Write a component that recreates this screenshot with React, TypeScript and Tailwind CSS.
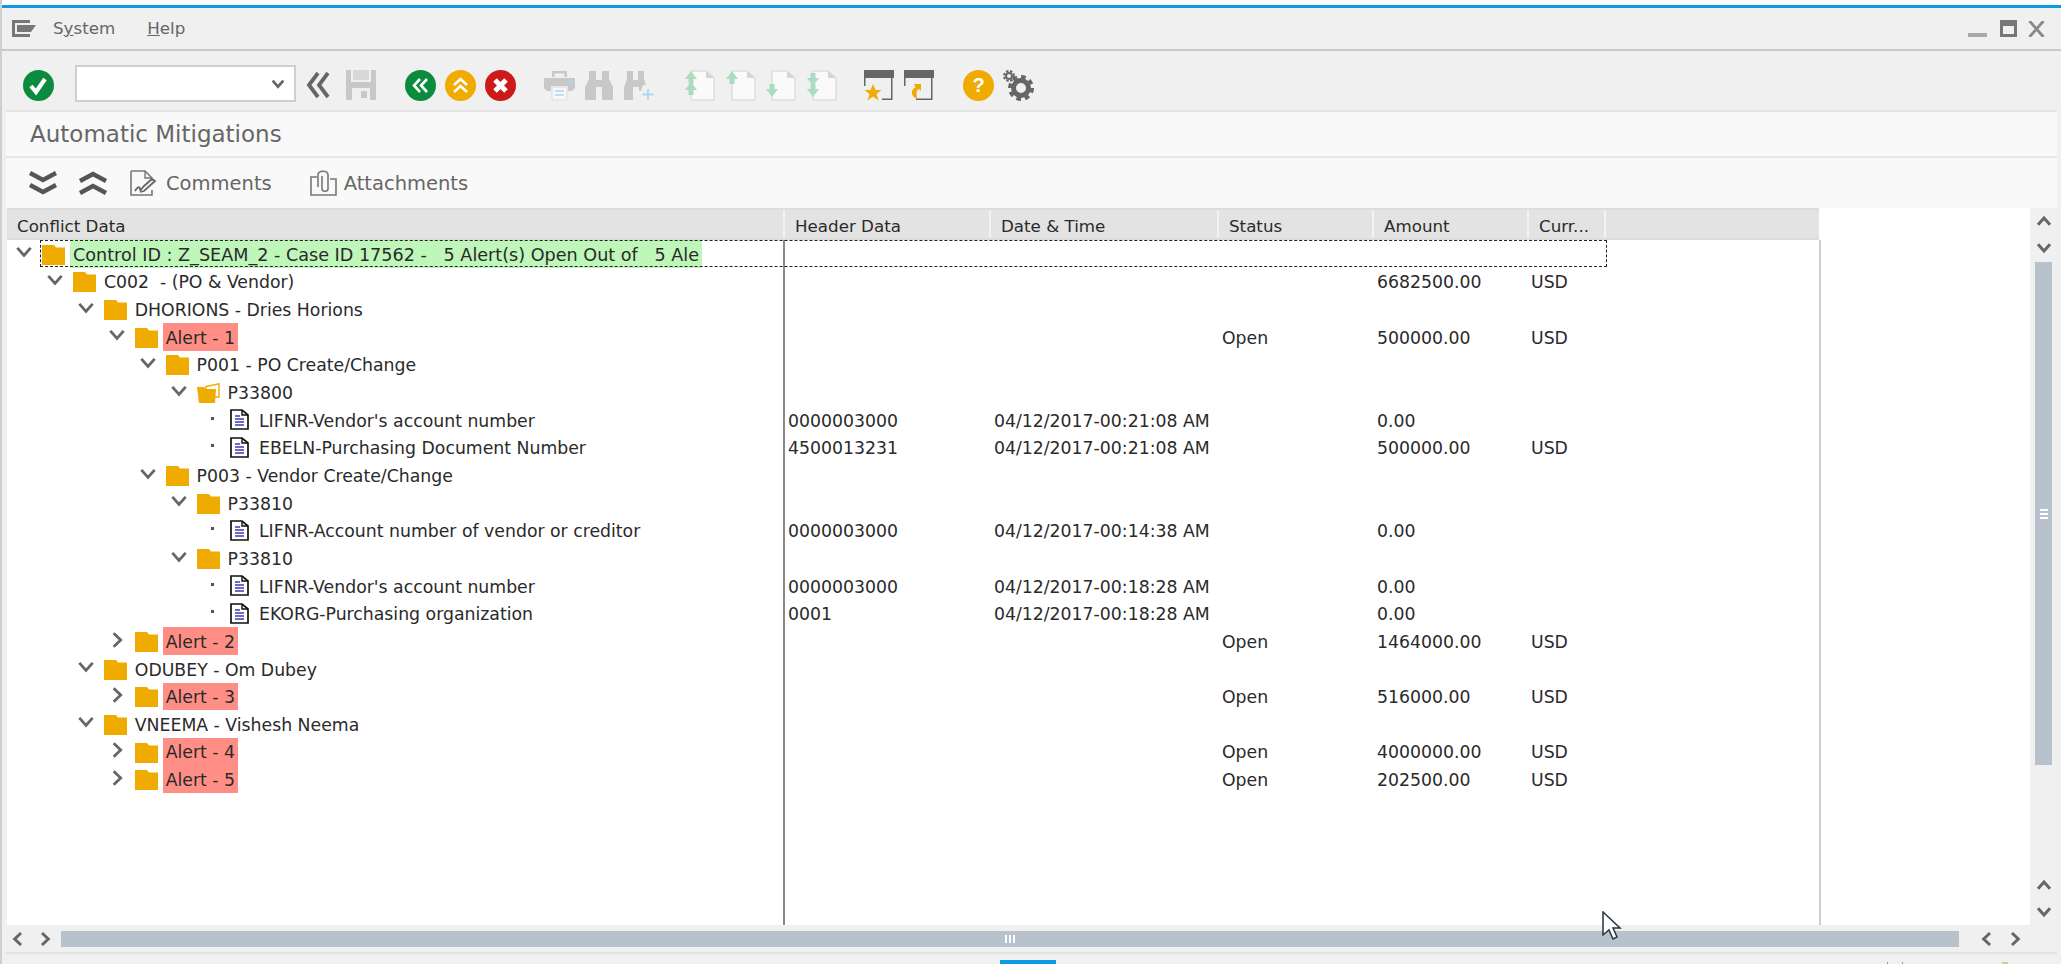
import React from "react";

const FONT = "font-['DejaVu_Sans',sans-serif]";

function Chevron({ dir, className = "", size = 12, stroke = 2.4 }: { dir: "up" | "down" | "left" | "right"; className?: string; size?: number; stroke?: number }) {
  const d = { up: "M2 8.500 6 4l4 4.500", down: "M2 3.500 6 8l4-4.500", left: "M8 2 3.800 6 8 10", right: "M4 2l4.200 4L4 10" }[dir];
  return (
    <svg width={size} height={size} viewBox="0 0 12 12" className={"shrink-0 " + className}>
      <path d={d} fill="none" stroke="#666" strokeWidth={stroke} />
    </svg>
  );
}

function Folder({ open }: { open?: boolean }) {
  return (
    <svg width="23" height="20" viewBox="0 0 23 20" className="mt-[2px] shrink-0">
      {open ? (
        <>
          <path d="M9 3.500 22 .8V14H9z" fill="#fff" stroke="#f0ab00" strokeWidth="1.400" />
          <path d="M0 4h7l2 2h10l-1 14H2z" fill="#f0ab00" />
        </>
      ) : (
        <path d="M0 0h12l2 2.500h9V20H0z" fill="#f0ab00" />
      )}
    </svg>
  );
}

function Doc() {
  return (
    <svg width="19" height="21" viewBox="0 0 19 21" className="shrink-0">
      <path d="M1 1h11l6 5v14H1z" fill="#fff" stroke="#111" strokeWidth="1.700" />
      <path d="M12 1v5h6" fill="none" stroke="#111" strokeWidth="1.400" />
      <path d="M5 7h5M5 10h9M5 13h9M5 16h9" stroke="#3b3bb0" strokeWidth="1.600" />
    </svg>
  );
}

function Round({ color, children }: { color: string; children: React.ReactNode }) {
  return (
    <svg width="31" height="31" viewBox="0 0 31 31" className="shrink-0">
      <circle cx="15.500" cy="15.500" r="15.500" fill={color} />
      {children}
    </svg>
  );
}

function Page({ up, down }: { up?: number[]; down?: number[] }) {
  return (
    <svg width="30" height="31" viewBox="0 0 30 31" className="shrink-0">
      <path d="M6 1h15l8 7v22H6z" fill="#fafafa" stroke="#dedede" strokeWidth="1.500" />
      <path d="M21 1v7h8z" fill="#d6d6d6" />
      {(up || []).map((y) => (
        <path key={"u" + y} d={`M0 ${y}l6-8 6 8h-3.500v5h-5v-5z`} fill="#a9dcc0" />
      ))}
      {(down || []).map((y) => (
        <path key={"d" + y} d={`M0 ${y}l6 8 6-8h-3.500v-5h-5v5z`} fill="#a9dcc0" />
      ))}
    </svg>
  );
}

function Gear() {
  return (
    <svg width="32" height="31" viewBox="0 0 32 31" className="shrink-0">
      <circle cx="19" cy="18" r="7.500" fill="none" stroke="#666" strokeWidth="5" />
      <circle cx="19" cy="18" r="11" fill="none" stroke="#666" strokeWidth="4" strokeDasharray="4.600 4" />
      <circle cx="7" cy="6" r="3" fill="none" stroke="#666" strokeWidth="2" />
      <circle cx="7" cy="6" r="5" fill="none" stroke="#666" strokeWidth="2" strokeDasharray="2.400 1.600" />
    </svg>
  );
}

type Row = {
  level: number;
  text: string;
  tone?: "green" | "red";
  state?: "open" | "closed" | "leaf";
  openFolder?: boolean;
  header?: string;
  date?: string;
  status?: string;
  amount?: string;
  curr?: string;
};

const rows: Row[] = [
  { level: 0, text: "Control ID : Z_SEAM_2 - Case ID 17562 -   5 Alert(s) Open Out of   5 Ale", tone: "green", state: "open" },
  { level: 1, text: "C002  - (PO & Vendor)", state: "open", amount: "6682500.00", curr: "USD" },
  { level: 2, text: "DHORIONS - Dries Horions", state: "open" },
  { level: 3, text: "Alert - 1", tone: "red", state: "open", status: "Open", amount: "500000.00", curr: "USD" },
  { level: 4, text: "P001 - PO Create/Change", state: "open" },
  { level: 5, text: "P33800", state: "open", openFolder: true },
  { level: 6, text: "LIFNR-Vendor's account number", state: "leaf", header: "0000003000", date: "04/12/2017-00:21:08 AM", amount: "0.00" },
  { level: 6, text: "EBELN-Purchasing Document Number", state: "leaf", header: "4500013231", date: "04/12/2017-00:21:08 AM", amount: "500000.00", curr: "USD" },
  { level: 4, text: "P003 - Vendor Create/Change", state: "open" },
  { level: 5, text: "P33810", state: "open" },
  { level: 6, text: "LIFNR-Account number of vendor or creditor", state: "leaf", header: "0000003000", date: "04/12/2017-00:14:38 AM", amount: "0.00" },
  { level: 5, text: "P33810", state: "open" },
  { level: 6, text: "LIFNR-Vendor's account number", state: "leaf", header: "0000003000", date: "04/12/2017-00:18:28 AM", amount: "0.00" },
  { level: 6, text: "EKORG-Purchasing organization", state: "leaf", header: "0001", date: "04/12/2017-00:18:28 AM", amount: "0.00" },
  { level: 3, text: "Alert - 2", tone: "red", state: "closed", status: "Open", amount: "1464000.00", curr: "USD" },
  { level: 2, text: "ODUBEY - Om Dubey", state: "open" },
  { level: 3, text: "Alert - 3", tone: "red", state: "closed", status: "Open", amount: "516000.00", curr: "USD" },
  { level: 2, text: "VNEEMA - Vishesh Neema", state: "open" },
  { level: 3, text: "Alert - 4", tone: "red", state: "closed", status: "Open", amount: "4000000.00", curr: "USD" },
  { level: 3, text: "Alert - 5", tone: "red", state: "closed", status: "Open", amount: "202500.00", curr: "USD" },
];

function TreeRow({ row, focused }: { row: Row; focused: boolean }) {
  const leaf = row.state === "leaf";
  return (
    <div className="relative flex h-[27.67px] shrink-0 items-stretch text-[17.3px] leading-none text-[#2a2a2a]">
      <div className="flex w-[778px] shrink-0 items-center border-r-2 border-[#8a8a8a]" style={{ paddingLeft: 8 + row.level * 30.9 }}>
        <div className="flex w-[18px] shrink-0 justify-center pb-[3px]">
          {leaf ? (
            <div className="ml-[6px] h-[3px] w-[3px] bg-[#555]" />
          ) : (
            <Chevron dir={row.state === "open" ? "down" : "right"} size={20} stroke={1.7} />
          )}
        </div>
        <div className={leaf ? "ml-[11.6px] flex" : "ml-[9px] flex"}>{leaf ? <Doc /> : <Folder open={row.openFolder} />}</div>
        <div
          className={
            "flex h-full items-center whitespace-pre px-[3px] pt-[3px] " +
            (leaf ? "ml-[7px]" : "ml-[5px]") +
            (row.tone === "green" ? " bg-[#bff6ba] text-[17.6px]" : row.tone === "red" ? " bg-[#ff8f86]" : "")
          }
        >
          {row.text}
        </div>
      </div>
      <div className="flex w-[206px] shrink-0 items-center pl-[3px] pt-[3px]">{row.header}</div>
      <div className="flex w-[228px] shrink-0 items-center pl-[3px] pt-[3px]">{row.date}</div>
      <div className="flex w-[155px] shrink-0 items-center pl-[3px] pt-[3px]">{row.status}</div>
      <div className="flex w-[155px] shrink-0 items-center pl-[3px] pt-[3px]">{row.amount}</div>
      <div className="flex w-[77px] shrink-0 items-center pl-[2px] pt-[3px]">{row.curr}</div>
      {focused && <div className="absolute left-[33px] top-0 h-[27px] w-[1567px] border border-dashed border-[#222]" />}
    </div>
  );
}

function Head({ w, children }: { w: string; children?: React.ReactNode }) {
  return <div className={"flex h-full shrink-0 items-center border-r-2 border-[#f2f2f2] pl-[10px] pt-[5px] " + w}>{children}</div>;
}

export default function App() {
  return (
    <div className={"relative flex h-[964px] w-full flex-col overflow-hidden border-l-2 border-[#cfcfcf] bg-[#f0f0f0] " + FONT}>
      <div className="h-[5px] shrink-0 bg-white" />
      <div className="h-[3px] shrink-0 bg-[#0a9be2]" />

      {/* menu bar */}
      <div className="flex h-[43px] shrink-0 items-center border-b-2 border-[#c9c9c9] pl-[10px] pr-[16px] text-[16.7px] text-[#666]">
        <svg width="24" height="17" viewBox="0 0 24 17" className="shrink-0">
          <path d="M0 0h18v3H3v11h15v3H0z" fill="#777" />
          <path d="M5 5h19l-5 7H5z" fill="#777" />
        </svg>
        <span className="ml-[17px]">S<span className="underline">y</span>stem</span>
        <span className="ml-[32px]"><span className="underline">H</span>elp</span>
        <div className="ml-auto flex items-end">
          <div className="h-[4px] w-[19px] bg-[#aaa]" />
          <div className="ml-[13px] h-[17px] w-[17px] border-[3px] border-t-[6px] border-[#777]" />
          <svg width="17" height="16" viewBox="0 0 17 16" className="ml-[11px]"><path d="M1.500 0l14 16M15.500 0l-14 16" stroke="#888" strokeWidth="2.800" /></svg>
        </div>
      </div>

      {/* system toolbar */}
      <div className="flex h-[59px] shrink-0 items-center pl-[21px] pt-[9px]">
        <Round color="#0b8b3e"><path d="M8 16l5 6 9-13" fill="none" stroke="#fff" strokeWidth="4.200" /></Round>
        <div className="mb-[3px] ml-[21px] flex h-[37px] w-[221px] shrink-0 items-center justify-end border-2 border-[#cfcfcf] bg-white pr-[8px]">
          <Chevron dir="down" size={16} stroke={2} />
        </div>
        <svg width="26" height="28" viewBox="0 0 26 28" className="ml-[9px] shrink-0">
          <path d="M13 2 4 14l9 12M23 2 14 14l9 12" fill="none" stroke="#666" strokeWidth="3.800" />
        </svg>
        <svg width="30" height="30" viewBox="0 0 30 30" className="ml-[15px] shrink-0">
          <path d="M0 0h30v30H0z" fill="#c8c8c8" />
          <path d="M5 0h20v12H5z" fill="#f0f0f0" />
          <path d="M7 0h16v10H7z" fill="#d8d8d8" />
          <path d="M6 18h18v12H6z" fill="#efefef" />
          <path d="M15 21h6v7h-6z" fill="#c8c8c8" />
        </svg>
        <div className="ml-[29px] flex shrink-0 gap-[9px]">
          <Round color="#0b8b3e"><path d="M15 9l-6 6.500 6 6.500M22 9l-6 6.500 6 6.500" fill="none" stroke="#fff" strokeWidth="2.600" /></Round>
          <Round color="#f0ab00"><path d="M9 15l6.500-6 6.500 6M9 22l6.500-6 6.500 6" fill="none" stroke="#fff" strokeWidth="2.600" /></Round>
          <Round color="#cc1a1a"><path d="M10 10l11 11M21 10 10 21" fill="none" stroke="#fff" strokeWidth="5" /></Round>
        </div>
        <svg width="31" height="31" viewBox="0 0 31 31" className="ml-[28px] shrink-0">
          <path d="M8 1h15v6h-2.500V3.500h-10V7H8z" fill="#c8c8c8" />
          <path d="M0 8h31v10l-3 3h-4v-5H7v5H3l-3-3z" fill="#c8c8c8" />
          <path d="M25 10h4v2h-4z" fill="#a9d8f0" />
          <path d="M8 17h15v13H8z" fill="#f7f7f7" stroke="#ddd" />
          <path d="M11 21h9M11 25h9" stroke="#a9d8f0" strokeWidth="1.600" />
        </svg>
        <svg width="28" height="31" viewBox="0 0 28 31" className="ml-[10px] shrink-0">
          <path d="M4 1h7v9h6V1h7v8l4 8v13H17V17h-6v13H0V17l4-8z" fill="#c8c8c8" />
        </svg>
        <svg width="31" height="31" viewBox="0 0 31 31" className="ml-[11px] shrink-0">
          <path d="M3 1h6v9h5V1h6v8l2 6h-3l-2 6h-2v-4h-6v13H0V17l3-8z" fill="#c8c8c8" />
          <path d="M24 19v11M18.500 24.500h11" stroke="#a9d8f0" strokeWidth="1.800" />
        </svg>
        <div className="ml-[30px] flex shrink-0 gap-[10.7px]">
          <Page up={[9, 20]} />
          <Page up={[9]} />
          <Page down={[19]} />
          <Page down={[8, 19]} />
        </div>
        <svg width="30" height="31" viewBox="0 0 30 31" className="ml-[27px] shrink-0">
          <path d="M0 0h30v8H0z" fill="#666" />
          <path d="M0 8v8h1.500V8zM28.500 8v22H18v-1.500h9V8z" fill="#666" />
          <path d="M9 14l2.500 6h6l-5 4 2 6.500-5.500-4-5.500 4 2-6.500-5-4h6z" fill="#f0ab00" />
        </svg>
        <svg width="30" height="31" viewBox="0 0 30 31" className="ml-[10px] shrink-0">
          <path d="M0 0h30v8H0z" fill="#666" />
          <path d="M0 8v8h1.500V8zM28.500 8v22H12v-1.500h15V8z" fill="#666" />
          <path d="M10 14h7v7l-2-2-2 1.500c-1 1.500 0 5 0 8-3-.5-6-4-5-7.500 .5-1.500 2-3 3.500-3.500z" fill="#f0ab00" />
        </svg>
        <div className="ml-[28.5px] shrink-0">
          <Round color="#f0ab00">
            <text x="15.500" y="22" textAnchor="middle" fontSize="20" fontWeight="700" fill="#fff" fontFamily="Liberation Sans, sans-serif">?</text>
          </Round>
        </div>
        <div className="ml-[8px] shrink-0"><Gear /></div>
      </div>

      {/* title */}
      <div className="mx-[4px] flex h-[48px] shrink-0 items-center border-y-2 border-[#e6e6e6] bg-[#f9f9f9] pl-[24px] pt-[1px] text-[23px] text-[#666]">
        Automatic Mitigations
      </div>

      {/* application toolbar */}
      <div className="mx-[4px] flex h-[50px] shrink-0 items-center bg-[#f9f9f9] pl-[22px] text-[19.5px] text-[#666]">
        <svg width="30" height="24" viewBox="0 0 30 24" className="shrink-0">
          <path d="M2 2l13 7 13-7M2 14l13 7 13-7" fill="none" stroke="#555" strokeWidth="4.400" />
        </svg>
        <svg width="30" height="24" viewBox="0 0 30 24" className="ml-[20px] shrink-0">
          <path d="M2 10 15 3l13 7M2 22l13-7 13 7" fill="none" stroke="#555" strokeWidth="4.400" />
        </svg>
        <svg width="28" height="26" viewBox="0 0 28 26" className="ml-[22px] shrink-0">
          <path d="M1 1h14l7 7v3M22 20v5H1V1" fill="none" stroke="#777" strokeWidth="1.600" />
          <path d="M15 1v7h7" fill="none" stroke="#777" strokeWidth="1.400" />
          <path d="M5 21c2-4 5-5 5-2s2-1 4-3l8-7 3 2-11 10-4 1" fill="none" stroke="#666" strokeWidth="1.800" />
        </svg>
        <span className="ml-[8px] pt-[2px]">Comments</span>
        <svg width="27" height="26" viewBox="0 0 27 26" className="ml-[38px] shrink-0">
          <path d="M7 7H1v18h25V9h-6" fill="none" stroke="#777" strokeWidth="1.600" />
          <path d="M8 17V5c0-5 10-5 10 0v14c0 3-6 3-6 0V6" fill="none" stroke="#777" strokeWidth="1.600" />
        </svg>
        <span className="ml-[7px] pt-[2px]">Attachments</span>
      </div>

      {/* body */}
      <div className="flex min-h-0 flex-1 pb-[5px] pl-[5px]">
        <div className="flex w-[2023px] shrink-0 flex-col bg-white">
          <div className="flex h-[32px] w-[1812px] shrink-0 items-center border-y-2 border-[#dcdcdc] bg-[#e3e3e3] text-[16.7px] leading-none text-[#2a2a2a]">
            <Head w="w-[778px]">Conflict Data</Head>
            <Head w="w-[206px]">Header Data</Head>
            <Head w="w-[228px]">Date &amp; Time</Head>
            <Head w="w-[155px]">Status</Head>
            <Head w="w-[155px]">Amount</Head>
            <Head w="w-[77px]">Curr...</Head>
          </div>
          <div className="flex min-h-0 w-[1814px] flex-1 flex-col border-r-2 border-[#cfcfcf]">
            {rows.map((r, i) => (
              <TreeRow key={i} row={r} focused={i === 0} />
            ))}
            <div className="flex min-h-0 flex-1">
              <div className="w-[778px] border-r-2 border-[#8a8a8a]" />
            </div>
          </div>
        </div>
        {/* vertical scrollbar */}
        <div className="flex w-[31px] shrink-0 flex-col items-center pb-[4px] pr-[4px] pt-[4px]">
          <Chevron dir="up" size={18} stroke={2} className="mb-[9px]" />
          <Chevron dir="down" size={18} stroke={2} />
          <div className="mt-[5px] flex h-[503px] w-[17px] items-center justify-center bg-[#b7c2cd]">
            <div className="flex flex-col gap-[2px]">
              <div className="h-[2px] w-[8px] bg-white" />
              <div className="h-[2px] w-[8px] bg-white" />
              <div className="h-[2px] w-[8px] bg-white" />
            </div>
          </div>
          <div className="flex-1" />
          <Chevron dir="up" size={18} stroke={2} className="mb-[9px]" />
          <Chevron dir="down" size={18} stroke={2} />
        </div>
      </div>

      {/* horizontal scrollbar */}
      <div className="flex h-[22px] shrink-0 items-center pb-[4px] pl-[7px] pr-[32px]">
        <Chevron dir="left" size={18} stroke={2} />
        <Chevron dir="right" size={18} stroke={2} className="ml-[9px]" />
        <div className="ml-[7px] flex h-[16px] w-[1898px] shrink-0 items-center justify-center gap-[2px] bg-[#b7c2cd]">
          <div className="h-[8px] w-[2px] bg-white" />
          <div className="h-[8px] w-[2px] bg-white" />
          <div className="h-[8px] w-[2px] bg-white" />
        </div>
        <Chevron dir="left" size={18} stroke={2} className="ml-[19px]" />
        <Chevron dir="right" size={18} stroke={2} className="ml-[10px]" />
      </div>

      {/* status bar */}
      <div className="relative mx-[4px] h-[12px] shrink-0 border-t-2 border-[#e2e2e2] pl-[994px]">
        <div className="mt-[6px] h-[4px] w-[56px] bg-[#0a9be2]" />
        <div className="absolute bottom-0 left-[1881px] h-[2px] w-[1px] bg-[#999]" />
        <div className="absolute bottom-0 left-[1896px] h-[2px] w-[1px] bg-[#999]" />
        <div className="absolute bottom-0 left-[1996px] h-[2px] w-[6px] bg-[#d9c89a]" />
      </div>

      {/* mouse pointer */}
      <svg width="20" height="30" viewBox="0 0 20 30" className="absolute left-[1600px] top-[911px]">
        <path d="M1 1v23l6-5 4 9 4-2-4-9h7z" fill="#fff" stroke="#2a3340" strokeWidth="1.500" />
      </svg>
    </div>
  );
}
